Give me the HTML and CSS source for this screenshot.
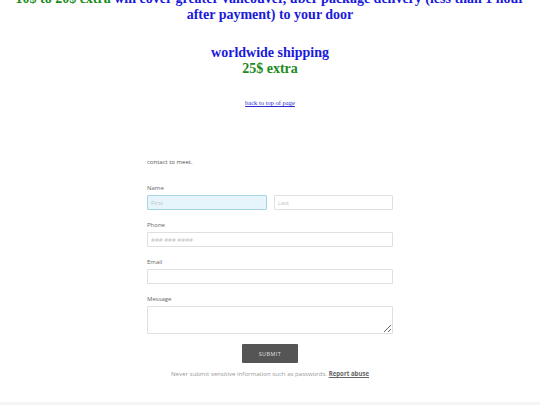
FILE: index.html
```html
<!DOCTYPE html>
<html>
<head>
<meta charset="utf-8">
<link rel="stylesheet" href="styles.css">
</head>
<body>
<div class="page">
  <h3 class="promo promo-top"><span class="green">10$ to 20$ extra</span> will cover greater vancouver, uber package delivery (less than 1 hour after payment) to your door</h3>
  <h3 class="promo promo-world">worldwide shipping<br><span class="green">25$ extra</span></h3>
  <p class="toplink"><a href="#">back to top of page</a></p>

  <form class="contact">
    <p class="intro">contact to meet.</p>
    <div class="field">
      <label class="lbl">Name</label>
      <div class="row">
        <input class="inp focused" type="text" placeholder="First">
        <input class="inp" type="text" placeholder="Last">
      </div>
    </div>
    <div class="field">
      <label class="lbl">Phone</label>
      <input class="inp" type="text" placeholder="### ### ####">
    </div>
    <div class="field">
      <label class="lbl">Email</label>
      <input class="inp" type="text">
    </div>
    <div class="field">
      <label class="lbl">Message</label>
      <textarea class="inp area"></textarea>
    </div>
    <div class="actions"><button class="submit" type="button">SUBMIT</button></div>
    <p class="note">Never submit sensitive information such as passwords. <a href="#" class="abuse">Report abuse</a></p>
  </form>
</div>
<div class="footer-band"></div>
</body>
</html>
```

FILE: styles.css
```css
html, body {
  margin: 0;
  padding: 0;
  background: #fff;
  height: 405px;
  overflow: hidden;
}
.page {
  display: flex;
  flex-direction: column;
  align-items: center;
  height: 402px;
}
.promo {
  font-family: "Liberation Serif", "Times New Roman", serif;
  font-weight: bold;
  font-size: 14px;
  line-height: 16px;
  color: #1a1adb;
  text-align: center;
  margin: 0;
}
.promo-top {
  width: 520px;
  margin-top: -9px;
}
.promo-world {
  margin-top: 22px;
}
.green { color: #1a8a1a; }
.toplink {
  margin: 21px 0 0;
  font-family: "Liberation Serif", serif;
  font-size: 6.5px;
  line-height: 9px;
}
.toplink a { color: #2a2ad0; }
.contact {
  width: 246px;
  margin-top: 51px;
  font-family: "Open Sans", sans-serif;
  color: #666;
}
.intro {
  margin: 0 0 18px;
  font-size: 6px;
  line-height: 8px;
  color: #555;
}
.field {
  display: flex;
  flex-direction: column;
  gap: 3px;
  margin-bottom: 11px;
}
.lbl {
  font-size: 6px;
  line-height: 8px;
  color: #666;
}
.row {
  display: flex;
  gap: 7px;
}
.inp {
  box-sizing: border-box;
  height: 15px;
  width: 100%;
  min-width: 0;
  border: 1px solid #e0e0e0;
  border-radius: 1px;
  background: #fff;
  padding: 0 3px;
  font-family: "Open Sans", sans-serif;
  font-size: 6px;
  color: #333;
  margin: 0;
  outline: none;
}
.inp::placeholder { color: #c2c2c2; }
.focused {
  background: #e6f5fb;
  border-color: #a6d4e2;
}
.area {
  height: 28px;
  resize: vertical;
  display: block;
}
.field:nth-of-type(4) { margin-bottom: 10px; }
.actions {
  display: flex;
  justify-content: center;
}
.submit {
  width: 56px;
  height: 19px;
  background: #555;
  border: none;
  border-radius: 1px;
  color: #e0e0e0;
  font-family: "Open Sans", sans-serif;
  font-size: 5.4px;
  letter-spacing: 0.5px;
  padding: 0;
}
.note {
  margin: 7px 0 0;
  text-align: center;
  font-size: 6.1px;
  line-height: 8px;
  color: #999;
}
.abuse {
  color: #666;
  font-weight: bold;
  text-decoration: underline;
}
.footer-band {
  height: 3px;
  background: #f4f4f4;
}
```
